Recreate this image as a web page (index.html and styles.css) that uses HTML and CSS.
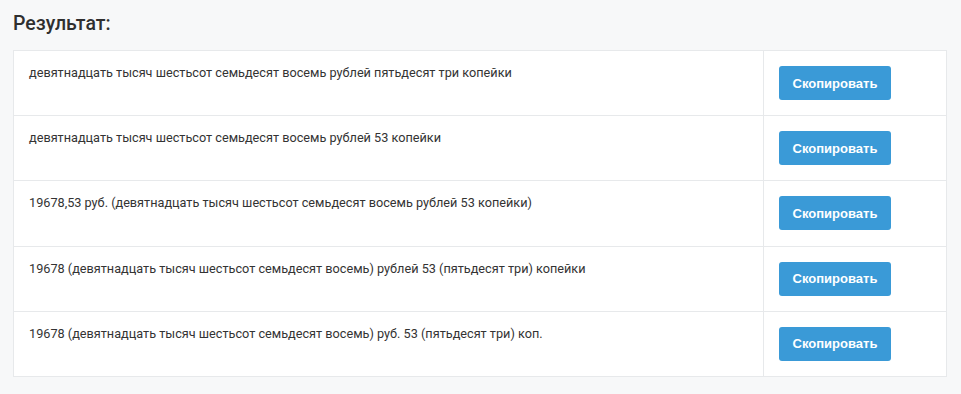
FILE: index.html
```html
<!DOCTYPE html>
<html lang="ru">
<head>
    <meta charset="UTF-8">
    <title>Результат</title>
    <link rel="stylesheet" href="styles.css">
</head>
<body>
    <div class="result">
        <h2 class="result-title">Результат:</h2>
        <table class="result-table">
            <tr>
                <td class="result-text">девятнадцать тысяч шестьсот семьдесят восемь рублей пятьдесят три копейки</td>
                <td class="result-action"><button class="copy-button">Скопировать</button></td>
            </tr>
            <tr>
                <td class="result-text">девятнадцать тысяч шестьсот семьдесят восемь рублей 53 копейки</td>
                <td class="result-action"><button class="copy-button">Скопировать</button></td>
            </tr>
            <tr>
                <td class="result-text">19678,53 руб. (девятнадцать тысяч шестьсот семьдесят восемь рублей 53 копейки)</td>
                <td class="result-action"><button class="copy-button">Скопировать</button></td>
            </tr>
            <tr>
                <td class="result-text">19678 (девятнадцать тысяч шестьсот семьдесят восемь) рублей 53 (пятьдесят три) копейки</td>
                <td class="result-action"><button class="copy-button">Скопировать</button></td>
            </tr>
            <tr>
                <td class="result-text">19678 (девятнадцать тысяч шестьсот семьдесят восемь) руб. 53 (пятьдесят три) коп.</td>
                <td class="result-action"><button class="copy-button">Скопировать</button></td>
            </tr>
        </table>
    </div>
</body>
</html>
```

FILE: styles.css
```css
body {
    margin: 0;
    background-color: #f7f8f9;
    font-family: Roboto, "Liberation Sans", sans-serif;
    color: #333333;
}

.result {
    padding: 12px 14px 16px 13px;
}

.result-title {
    margin: 0 0 14px 0;
    font-size: 19.5px;
    font-weight: 500;
    line-height: 24px;
    color: #2f2f2f;
}

.result-table {
    width: 100%;
    border-collapse: collapse;
    background-color: #ffffff;
}

.result-table td {
    border: 1px solid #e7e9eb;
    vertical-align: top;
    padding: 15px 15px 15.2px 15px;
}

.result-text {
    font-size: 12.7px;
    line-height: 14px;
    padding-top: 16px;
}

.result-action {
    width: 152px;
}

.copy-button {
    display: block;
    width: 112px;
    height: 34px;
    border: none;
    border-radius: 3px;
    background-color: #3a9ad7;
    color: #ffffff;
    font-family: "Liberation Sans", Arial, sans-serif;
    font-size: 13px;
    font-weight: bold;
    cursor: pointer;
}
```
